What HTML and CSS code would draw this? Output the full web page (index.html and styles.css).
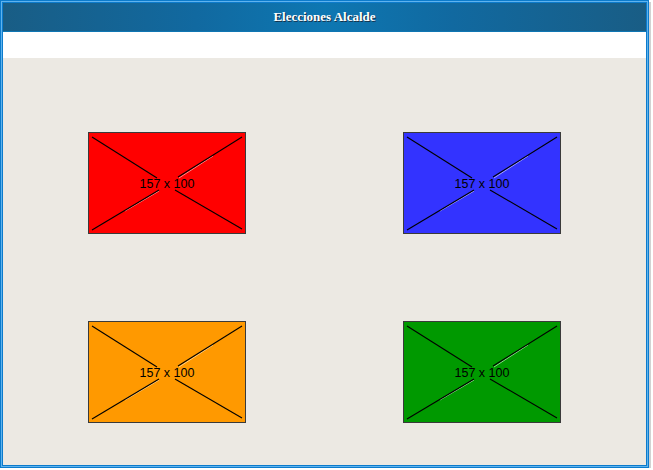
FILE: index.html
```html
<!DOCTYPE html>
<html lang="es">
<head>
<meta charset="utf-8">
<title>Elecciones Alcalde</title>
<link rel="stylesheet" href="styles.css">
</head>
<body>
<div class="frame">
  <div class="header">Elecciones Alcalde</div>
  <div class="toolbar"></div>
  <div class="content">
    <div class="row">
      <div class="ph ph-red">
        <svg class="ph-lines" width="156" height="100" viewBox="0 0 156 100">
          <line class="hl" x1="36" y1="78" x2="70" y2="58"/>
          <line class="hl" x1="124" y1="23" x2="90" y2="45"/>
          <line x1="3" y1="4" x2="68" y2="45"/>
          <line x1="3" y1="97" x2="70" y2="57"/>
          <line x1="153" y1="4" x2="89" y2="44"/>
          <line x1="153" y1="96" x2="86" y2="57"/>
        </svg>
        <span class="ph-label">157 x 100</span>
      </div>
      <div class="ph ph-blue">
        <svg class="ph-lines" width="156" height="100" viewBox="0 0 156 100">
          <line class="hl" x1="36" y1="78" x2="70" y2="58"/>
          <line class="hl" x1="124" y1="23" x2="90" y2="45"/>
          <line x1="3" y1="4" x2="68" y2="45"/>
          <line x1="3" y1="97" x2="70" y2="57"/>
          <line x1="153" y1="4" x2="89" y2="44"/>
          <line x1="153" y1="96" x2="86" y2="57"/>
        </svg>
        <span class="ph-label">157 x 100</span>
      </div>
    </div>
    <div class="row">
      <div class="ph ph-orange">
        <svg class="ph-lines" width="156" height="100" viewBox="0 0 156 100">
          <line class="hl" x1="36" y1="78" x2="70" y2="58"/>
          <line class="hl" x1="124" y1="23" x2="90" y2="45"/>
          <line x1="3" y1="4" x2="68" y2="45"/>
          <line x1="3" y1="97" x2="70" y2="57"/>
          <line x1="153" y1="4" x2="89" y2="44"/>
          <line x1="153" y1="96" x2="86" y2="57"/>
        </svg>
        <span class="ph-label">157 x 100</span>
      </div>
      <div class="ph ph-green">
        <svg class="ph-lines" width="156" height="100" viewBox="0 0 156 100">
          <line class="hl" x1="36" y1="78" x2="70" y2="58"/>
          <line class="hl" x1="124" y1="23" x2="90" y2="45"/>
          <line x1="3" y1="4" x2="68" y2="45"/>
          <line x1="3" y1="97" x2="70" y2="57"/>
          <line x1="153" y1="4" x2="89" y2="44"/>
          <line x1="153" y1="96" x2="86" y2="57"/>
        </svg>
        <span class="ph-label">157 x 100</span>
      </div>
    </div>
  </div>
</div>
</body>
</html>
```
FILE: styles.css
```css
html, body {
  margin: 0;
  padding: 0;
  background: #ffffff;
}

.frame {
  box-sizing: border-box;
  width: 649px;
  height: 468px;
  border: 3px double #0c7bcc;
  background: #5fb3ee;
  box-shadow: 2px 2px 0 #d2d2d2;
  display: flex;
  flex-direction: column;
  overflow: hidden;
}

.header {
  height: 29px;
  flex: none;
  border-bottom: 1px solid #0f76b3;
  box-sizing: border-box;
  background: linear-gradient(to right, #195d85 0%, #1169a0 30%, #0d77b2 50%, #1169a0 70%, #195d85 100%);
  color: #ffffff;
  font-family: "Liberation Serif", "Times New Roman", serif;
  font-weight: bold;
  font-size: 13px;
  text-shadow: 1px 1px 0 #16324a;
  display: flex;
  align-items: center;
  justify-content: center;
}

.toolbar {
  height: 26px;
  flex: none;
  background: #ffffff;
}

.content {
  flex: 1;
  background: #ece9e3;
  display: flex;
  flex-direction: column;
  gap: 87px;
  padding: 74px 85px 0 85px;
}

.row {
  display: flex;
  justify-content: space-between;
}

.ph {
  position: relative;
  box-sizing: border-box;
  width: 158px;
  height: 102px;
  border: 1px solid #3a3a3a;
  display: flex;
  align-items: center;
  justify-content: center;
}

.ph-red { background: #ff0000; }
.ph-blue { background: #3333ff; }
.ph-orange { background: #ff9900; }
.ph-green { background: #009900; }

.ph-lines {
  position: absolute;
  left: 0;
  top: 0;
}

.ph-lines line {
  stroke: #000000;
  stroke-width: 1.1;
}

.ph-lines line.hl {
  stroke: rgba(255, 255, 255, 0.55);
  stroke-width: 1;
}

.ph-label {
  position: relative;
  font-family: "Liberation Sans", Arial, sans-serif;
  font-size: 12.5px;
  color: #000000;
  margin-top: 1px;
}
```
